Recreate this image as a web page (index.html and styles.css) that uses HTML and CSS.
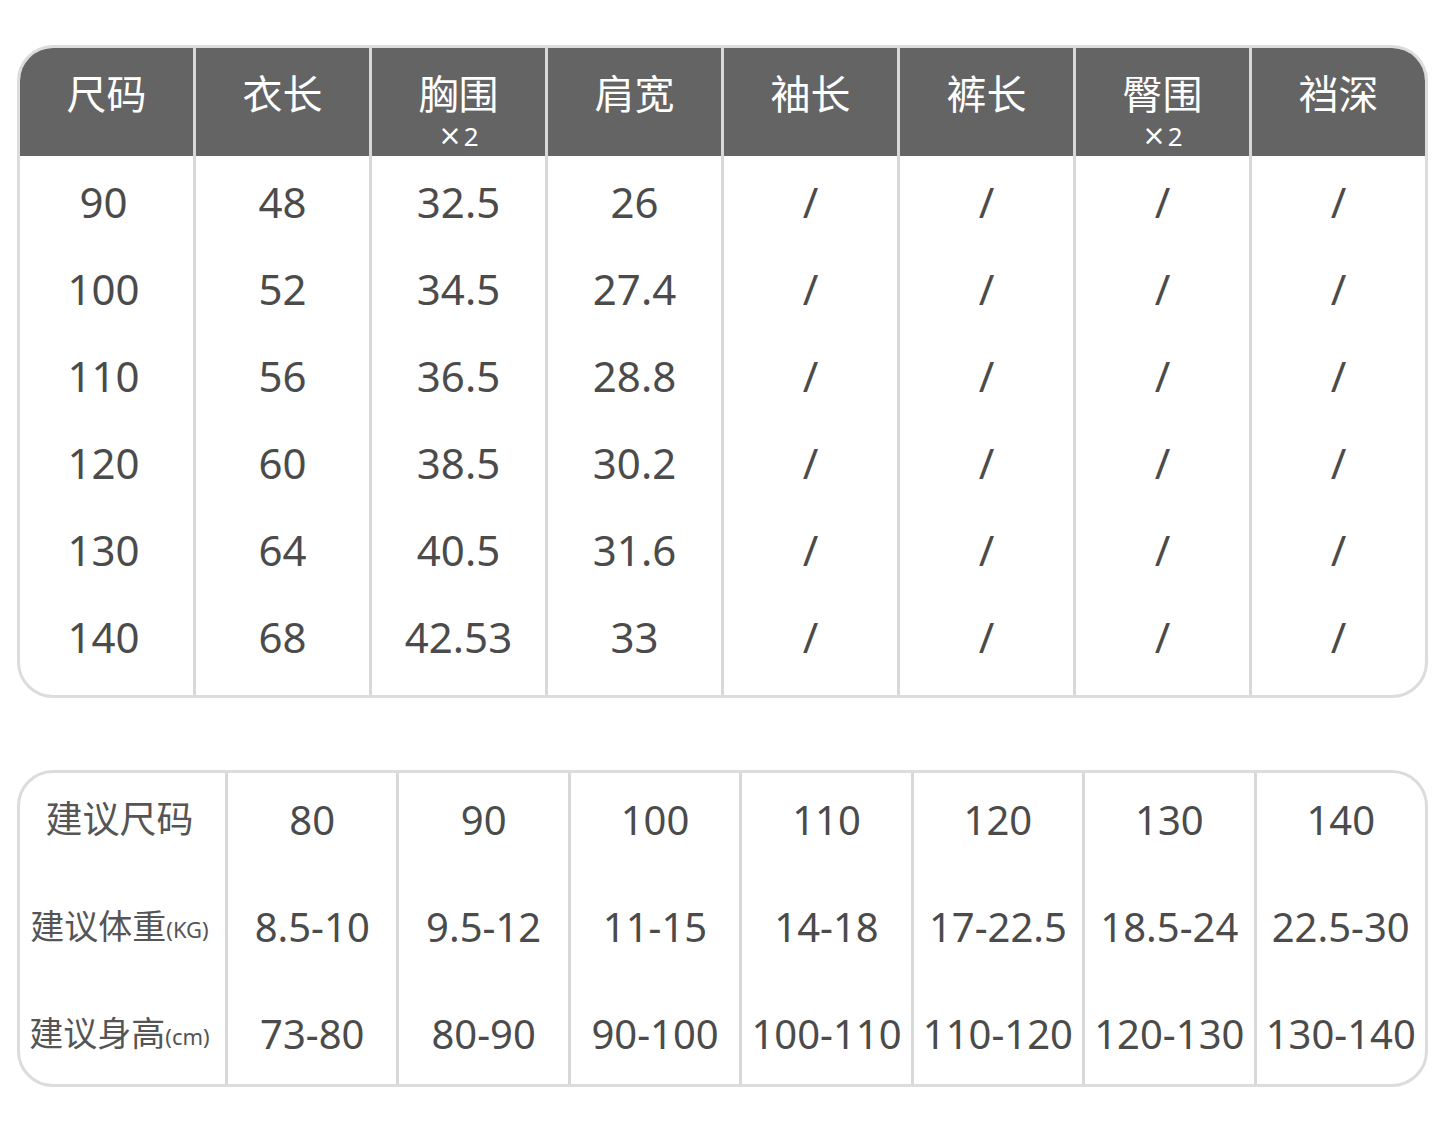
FILE: index.html
```html
<!DOCTYPE html>
<html lang="zh-CN">
<head>
<meta charset="utf-8">
<title>尺码表</title>
<link rel="stylesheet" href="styles.css">
</head>
<body>
<div class="page">
  <div class="size-table">
    <div class="col first">
      <div class="head"><span class="h-main">尺码</span></div>
      <div class="body"><div class="cell">90</div><div class="cell">100</div><div class="cell">110</div><div class="cell">120</div><div class="cell">130</div><div class="cell">140</div></div>
    </div>
    <div class="col">
      <div class="head"><span class="h-main">衣长</span></div>
      <div class="body"><div class="cell">48</div><div class="cell">52</div><div class="cell">56</div><div class="cell">60</div><div class="cell">64</div><div class="cell">68</div></div>
    </div>
    <div class="col">
      <div class="head"><span class="h-main">胸围</span><span class="h-sub"><span class="times">×</span>2</span></div>
      <div class="body"><div class="cell">32.5</div><div class="cell">34.5</div><div class="cell">36.5</div><div class="cell">38.5</div><div class="cell">40.5</div><div class="cell">42.53</div></div>
    </div>
    <div class="col">
      <div class="head"><span class="h-main">肩宽</span></div>
      <div class="body"><div class="cell">26</div><div class="cell">27.4</div><div class="cell">28.8</div><div class="cell">30.2</div><div class="cell">31.6</div><div class="cell">33</div></div>
    </div>
    <div class="col">
      <div class="head"><span class="h-main">袖长</span></div>
      <div class="body"><div class="cell">/</div><div class="cell">/</div><div class="cell">/</div><div class="cell">/</div><div class="cell">/</div><div class="cell">/</div></div>
    </div>
    <div class="col">
      <div class="head"><span class="h-main">裤长</span></div>
      <div class="body"><div class="cell">/</div><div class="cell">/</div><div class="cell">/</div><div class="cell">/</div><div class="cell">/</div><div class="cell">/</div></div>
    </div>
    <div class="col">
      <div class="head"><span class="h-main">臀围</span><span class="h-sub"><span class="times">×</span>2</span></div>
      <div class="body"><div class="cell">/</div><div class="cell">/</div><div class="cell">/</div><div class="cell">/</div><div class="cell">/</div><div class="cell">/</div></div>
    </div>
    <div class="col">
      <div class="head"><span class="h-main">裆深</span></div>
      <div class="body"><div class="cell">/</div><div class="cell">/</div><div class="cell">/</div><div class="cell">/</div><div class="cell">/</div><div class="cell">/</div></div>
    </div>
  </div>

  <div class="rec-table">
    <div class="rcol label-col">
      <div class="rcell r1"><span class="lbl-lg">建议尺码</span></div>
      <div class="rcell r2"><span class="lbl">建议体重</span><span class="unit">(KG)</span></div>
      <div class="rcell r3"><span class="lbl">建议身高</span><span class="unit">(cm)</span></div>
    </div>
    <div class="rcol"><div class="rcell r1">80</div><div class="rcell r2">8.5-10</div><div class="rcell r3">73-80</div></div>
    <div class="rcol"><div class="rcell r1">90</div><div class="rcell r2">9.5-12</div><div class="rcell r3">80-90</div></div>
    <div class="rcol"><div class="rcell r1">100</div><div class="rcell r2">11-15</div><div class="rcell r3">90-100</div></div>
    <div class="rcol"><div class="rcell r1">110</div><div class="rcell r2">14-18</div><div class="rcell r3">100-110</div></div>
    <div class="rcol"><div class="rcell r1">120</div><div class="rcell r2">17-22.5</div><div class="rcell r3">110-120</div></div>
    <div class="rcol"><div class="rcell r1">130</div><div class="rcell r2">18.5-24</div><div class="rcell r3">120-130</div></div>
    <div class="rcol"><div class="rcell r1">140</div><div class="rcell r2">22.5-30</div><div class="rcell r3">130-140</div></div>
  </div>
</div>
</body>
</html>
```

FILE: styles.css
```css
html, body {
  margin: 0;
  padding: 0;
  background: #ffffff;
}

body {
  font-family: "Noto Sans", "Noto Sans CJK SC", sans-serif;
  color: #4b4b4b;
}

.page {
  width: 1411px;
  padding: 45px 0 0 17px;
}

/* ---------- size table ---------- */
.size-table {
  display: flex;
  border: 3px solid #dcdcdc;
  border-radius: 36px;
  overflow: hidden;
  height: 647px;
}

.col {
  flex: 1 1 0;
  display: flex;
  flex-direction: column;
  border-left: 3px solid #d8d8d8;
}

.col.first {
  border-left: none;
}

.col.first .cell {
  padding-right: 6px;
}

.head {
  height: 108px;
  background: #646464;
  color: #ffffff;
  display: flex;
  flex-direction: column;
  align-items: center;
  padding-top: 26px;
  box-sizing: border-box;
}

.h-main {
  font-size: 40px;
  line-height: 40px;
}

.h-sub {
  display: flex;
  align-items: center;
  font-size: 26px;
  line-height: 24px;
  height: 24px;
  margin-top: 10px;
}

.times {
  display: inline-block;
  font-family: "DejaVu Sans", sans-serif;
  font-weight: 400;
  font-size: 28px;
  line-height: 24px;
  margin-right: 2px;
}

.body {
  flex: 1;
  padding-top: 2px;
}

.cell {
  height: 87px;
  display: flex;
  align-items: center;
  justify-content: center;
  font-size: 42px;
  line-height: 87px;
}

/* ---------- recommendation table ---------- */
.rec-table {
  display: flex;
  margin-top: 72px;
  border: 3px solid #dcdcdc;
  border-radius: 36px;
  overflow: hidden;
  height: 311px;
}

.rcol {
  flex: 1 1 0;
  display: flex;
  flex-direction: column;
  border-left: 3px solid #d8d8d8;
}

.rcol.label-col {
  flex: 0 0 205px;
  border-left: none;
  color: #555555;
}

.rcell {
  display: flex;
  align-items: center;
  justify-content: center;
  font-size: 40px;
  white-space: nowrap;
}

.label-col .rcell {
  padding-right: 6px;
}

.r1 { height: 92px; }
.r2 { height: 122px; }
.r3 { height: 92px; }

.lbl-lg {
  font-size: 37px;
  line-height: 44px;
}

.lbl {
  font-size: 34px;
  line-height: 40px;
}

.unit {
  font-size: 22px;
  line-height: 40px;
  padding-top: 6px;
}
```
